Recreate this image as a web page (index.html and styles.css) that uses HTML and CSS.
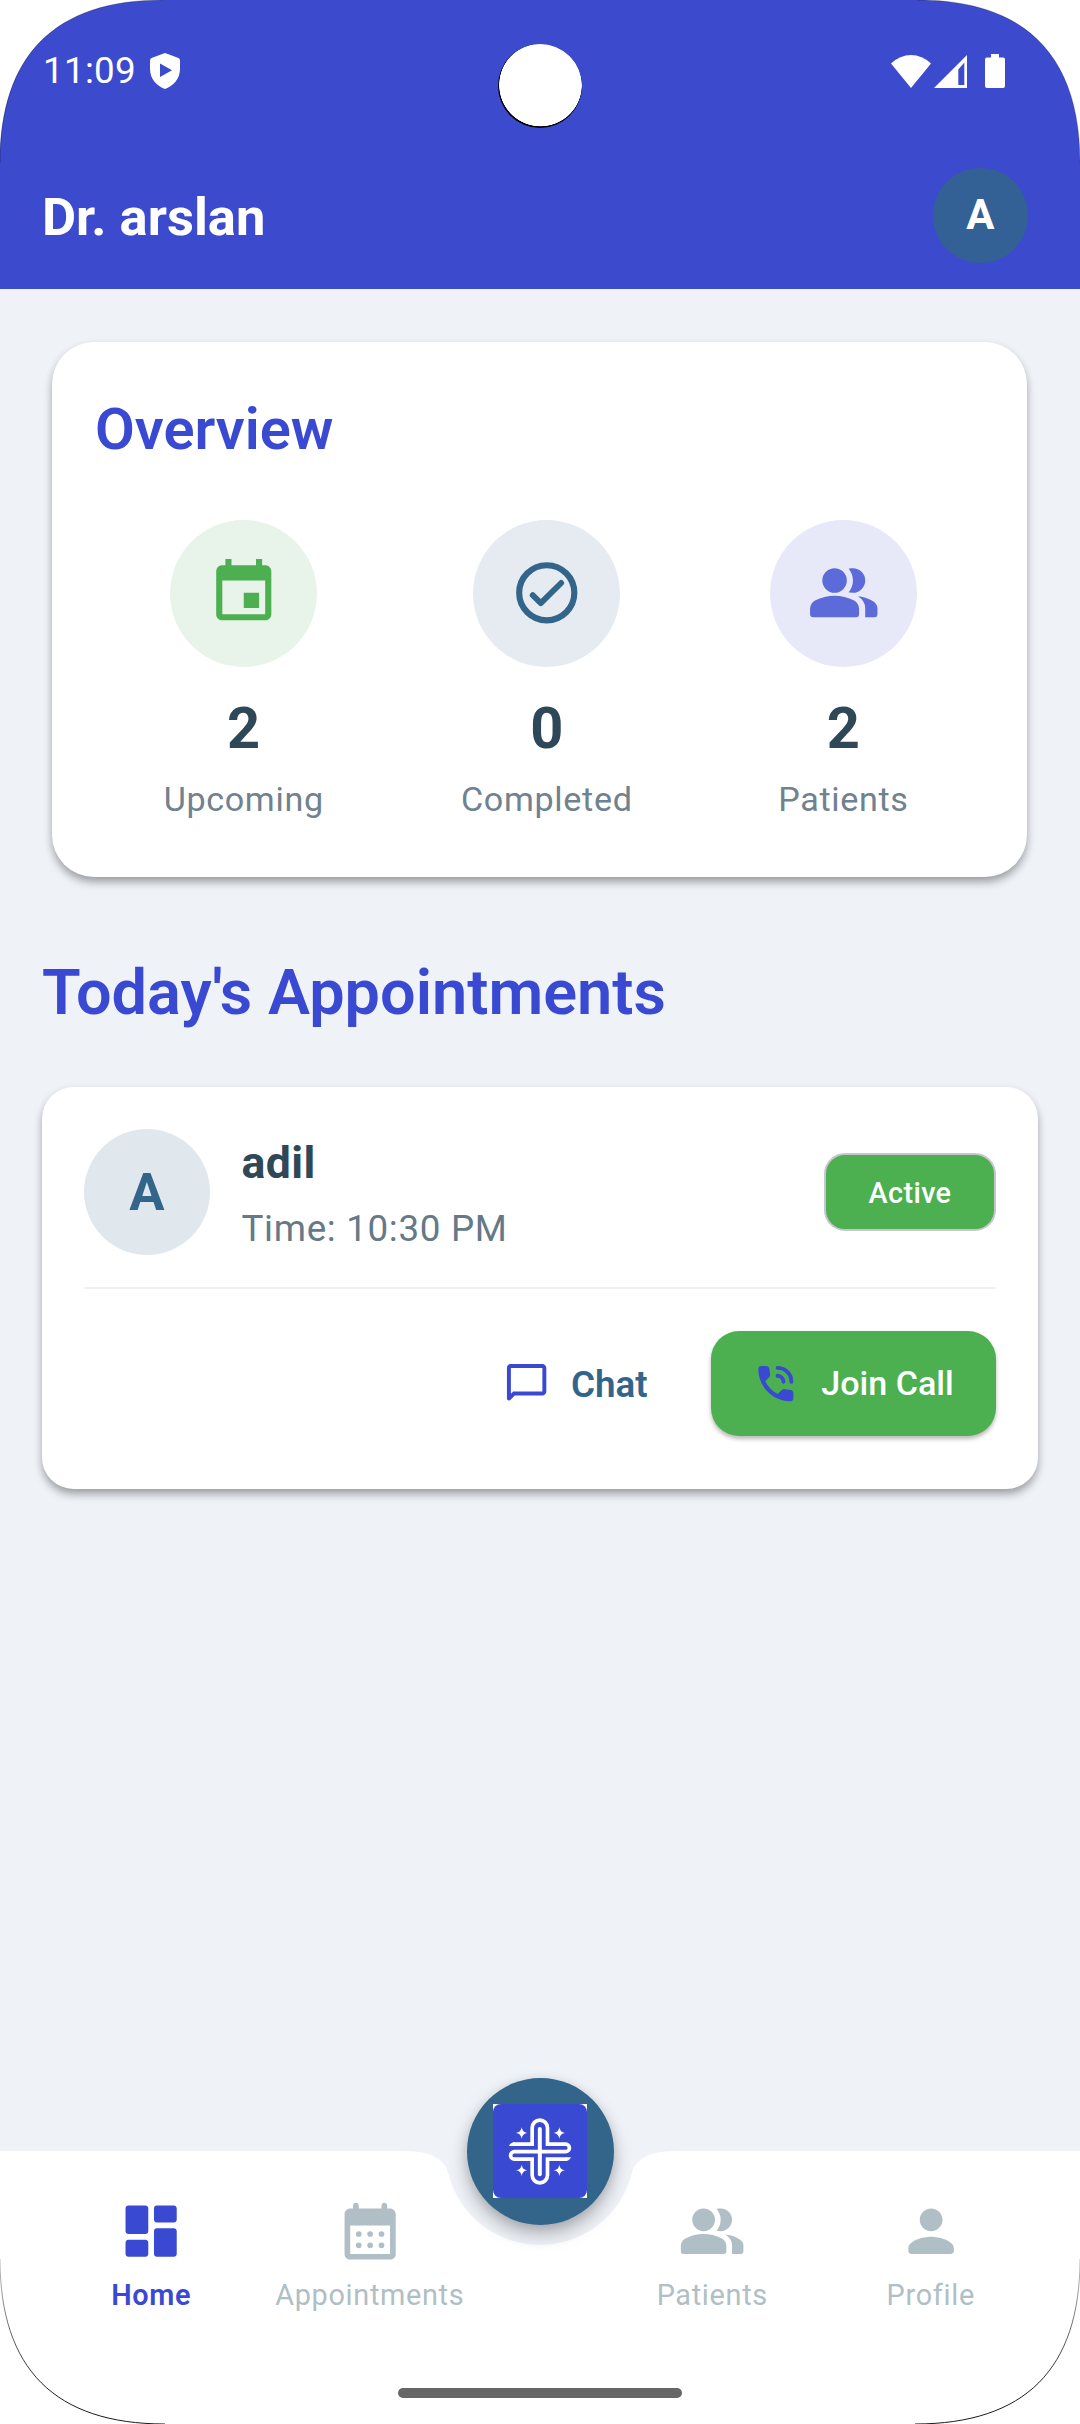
FILE: index.html
```html
<!DOCTYPE html>
<html lang="en">
<head>
<meta charset="utf-8">
<title>Doctor dashboard</title>
<link rel="stylesheet" href="styles.css">
</head>
<body>
<div class="phone">
  <header class="header">
    <div class="status">
      <span class="clock">11:09</span>
      <svg class="shield" viewBox="0 0 30 36"><path fill="#fff" fill-rule="evenodd" d="M15 0 28.500 5Q30 5.800 30 7.500V16C30 26 23 33 15 36 7 33 0 26 0 16V7.500Q0 5.800 1.500 5ZM10 10.500V24L22 17.300Z"/></svg>
      <span class="grow"></span>
      <svg class="wifi" viewBox="0 0 40 33"><path fill="#fff" d="M0 8.500Q9 0 20 0T40 8.500L20 33Z"/></svg>
      <svg class="signal" viewBox="0 0 33 33"><path fill="#fff" fill-rule="evenodd" d="M33 0V33H0ZM30.300 7.500 24.300 14.500V30H30.300Z"/></svg>
      <svg class="battery" viewBox="0 0 20 34"><path fill="#fff" d="M6 0h8v3.500h4a2 2 0 0 1 2 2V32a2 2 0 0 1-2 2H2a2 2 0 0 1-2-2V5.500a2 2 0 0 1 2-2h4Z"/></svg>
    </div>
    <div class="appbar">
      <h1 class="name">Dr. arslan</h1>
      <div class="me">A</div>
    </div>
  </header>

  <main class="content">
    <section class="card overview">
      <h2 class="card-title">Overview</h2>
      <div class="stats">
        <div class="stat">
          <div class="bubble green"><svg viewBox="0 0 24 24"><path d="M17 12h-5v5h5v-5zM16 1v2H8V1H6v2H5c-1.110 0-1.990.9-1.990 2L3 19c0 1.100.89 2 2 2h14c1.100 0 2-.9 2-2V5c0-1.100-.9-2-2-2h-1V1h-2zm3 18H5V8h14v11z"/></svg></div>
          <div class="count">2</div>
          <div class="label">Upcoming</div>
        </div>
        <div class="stat">
          <div class="bubble blue"><svg viewBox="0 0 24 24"><g fill="none" stroke="#33658a" stroke-width="2" stroke-linecap="round" stroke-linejoin="round"><circle cx="12" cy="12" r="9"/><path d="M7.400 12.800 10.050 15.400 16.700 8.800" stroke-width="1.900"/></g></svg></div>
          <div class="count">0</div>
          <div class="label">Completed</div>
        </div>
        <div class="stat">
          <div class="bubble violet"><svg viewBox="0 -960 960 960"><path d="M80-160q-40 0-40-40v-72q0-34 17.500-62.500T104-378q62-31 126-46.500T360-440q66 0 130 15.500T616-378q29 15 46.500 43.500T680-272v72q0 40-40 40Zm680 0v-120q0-44-24.500-84.500T666-434q51 6 96 20.500t84 35.500q36 20 55 44.500t19 53.500v80q0 40-40 40ZM360-480q-66 0-113-47t-47-113q0-66 47-113t113-47q66 0 113 47t47 113q0 66-47 113t-113 47Zm400-160q0 66-47 113t-113 47q-11 0-28-2.500t-28-5.500q27-32 41.500-71t14.500-81q0-42-14.500-81T544-792q14-5 28-6.500t28-1.500q66 0 113 47t47 113Z"/></svg></div>
          <div class="count">2</div>
          <div class="label">Patients</div>
        </div>
      </div>
    </section>

    <h2 class="section-title">Today's Appointments</h2>

    <article class="card appointment">
      <div class="patient">
        <div class="avatar">A</div>
        <div class="who">
          <div class="patient-name">adil</div>
          <div class="time">Time: 10:30 PM</div>
        </div>
        <div class="chip">Active</div>
      </div>
      <div class="actions">
        <div class="chat">
          <svg viewBox="0 0 24 24"><path d="M20 2H4c-1.100 0-2 .9-2 2v15.600c0 .89 1.080 1.340 1.710.71L6 18h14c1.100 0 2-.9 2-2V4c0-1.100-.9-2-2-2zm0 14H5.170L4 17.170V4h16v12z"/></svg>
          <span>Chat</span>
        </div>
        <div class="join">
          <svg viewBox="0 0 24 24"><path d="M3.200 4.600Q3.200 3 4.800 3H7.300Q8.600 3 8.800 4.300L9.200 7.200Q9.300 8.200 8.600 8.900L6.700 10.800Q8.800 15 13.100 17.300L15 15.400Q15.700 14.700 16.700 14.800L19.600 15.200Q21 15.400 21 16.700V19.300Q21 21 19.400 21C10.500 21 3.200 13.500 3.200 4.600Z"/><path fill="none" stroke="#3a49d2" stroke-width="2" stroke-linecap="round" d="M13 4a7 7 0 0 1 7 7M13 8a3.200 3.200 0 0 1 3 3"/></svg>
          <span>Join Call</span>
        </div>
      </div>
    </article>
  </main>

  <footer class="dock">
    <svg class="dock-shape" viewBox="0 0 1080 273"><path fill="#fff" d="M0 0H403.500Q443 0 448 21.700A94.500 94.500 0 0 0 540 93.800A94.500 94.500 0 0 0 632 21.700Q637 0 676.500 0H1080V273H0Z"/></svg>
    <nav class="tabs">
      <div class="tab active">
        <svg viewBox="0 0 24 24"><path d="M4 13h6c.55 0 1-.45 1-1V4c0-.55-.45-1-1-1H4c-.55 0-1 .45-1 1v8c0 .55.45 1 1 1zm0 8h6c.55 0 1-.45 1-1v-4c0-.55-.45-1-1-1H4c-.55 0-1 .45-1 1v4c0 .55.45 1 1 1zm10 0h6c.55 0 1-.45 1-1v-8c0-.55-.45-1-1-1h-6c-.55 0-1 .45-1 1v8c0 .55.45 1 1 1zM13 4v4c0 .55.45 1 1 1h6c.55 0 1-.45 1-1V4c0-.55-.45-1-1-1h-6c-.55 0-1 .45-1 1z"/></svg>
        <span>Home</span>
      </div>
      <div class="tab">
        <svg viewBox="0 0 24 24"><path fill-rule="evenodd" d="M19 4h-1V3c0-.55-.45-1-1-1s-1 .45-1 1v1H8V3c0-.55-.45-1-1-1s-1 .45-1 1v1H5c-1.110 0-1.990.9-1.990 2L3 20c0 1.100.89 2 2 2h14c1.100 0 2-.9 2-2V6c0-1.100-.9-2-2-2zm0 16H5V10h14v10z"/><circle cx="8" cy="13" r="1"/><circle cx="12" cy="13" r="1"/><circle cx="16" cy="13" r="1"/><circle cx="8" cy="17" r="1"/><circle cx="12" cy="17" r="1"/><circle cx="16" cy="17" r="1"/></svg>
        <span>Appointments</span>
      </div>
      <div class="tab right">
        <svg viewBox="0 -960 960 960"><path d="M80-160q-40 0-40-40v-72q0-34 17.500-62.500T104-378q62-31 126-46.500T360-440q66 0 130 15.500T616-378q29 15 46.500 43.500T680-272v72q0 40-40 40Zm680 0v-120q0-44-24.500-84.500T666-434q51 6 96 20.500t84 35.500q36 20 55 44.500t19 53.500v80q0 40-40 40ZM360-480q-66 0-113-47t-47-113q0-66 47-113t113-47q66 0 113 47t47 113q0 66-47 113t-113 47Zm400-160q0 66-47 113t-113 47q-11 0-28-2.500t-28-5.500q27-32 41.500-71t14.500-81q0-42-14.500-81T544-792q14-5 28-6.500t28-1.500q66 0 113 47t47 113Z"/></svg>
        <span>Patients</span>
      </div>
      <div class="tab">
        <svg viewBox="0 0 24 24"><path d="M12 12c2.210 0 4-1.790 4-4s-1.790-4-4-4-4 1.790-4 4 1.790 4 4 4zm0 2c-2.670 0-8 1.340-8 4v1c0 .55.45 1 1 1h14c.55 0 1-.45 1-1v-1c0-2.660-5.330-4-8-4z"/></svg>
        <span>Profile</span>
      </div>
    </nav>
    <div class="fab">
      <svg viewBox="0 0 282 282">
        <rect width="282" height="282" fill="#fff"/>
        <rect width="282" height="282" rx="24" fill="#3a49d2"/>
        <path fill="none" stroke="#fff" stroke-width="11" d="M60 120.500H117.500V71.500a23 23 0 0 1 46 0V120.500H218a11 11 0 0 1 0 22.500H64a11 11 0 0 0 0 22.500H117.500V213.500a23 23 0 0 0 46 0V165.500H222"/>
        <path fill="#fff" d="M48 126Q53 115 64 115V126ZM218 171V160H234Q229 171 218 171Z"/>
        <path stroke="#fff" stroke-width="12" stroke-linecap="round" d="M140.500 75V211"/>
        <path fill="#fff" d="M86 70q2 15 17 17-15 2-17 17-2-15-17-17 15-2 17-17ZM199 70q2 15 17 17-15 2-17 17-2-15-17-17 15-2 17-17ZM86 182q2 15 17 17-15 2-17 17-2-15-17-17 15-2 17-17ZM199 182q2 15 17 17-15 2-17 17-2-15-17-17 15-2 17-17Z"/>
      </svg>
    </div>
    <div class="gesture"></div>
  </footer>

  <div class="camera"></div>
  <svg class="bezel" viewBox="0 0 1080 2424">
    <defs>
      <linearGradient id="edge" gradientUnits="userSpaceOnUse" x1="0" y1="2259" x2="0" y2="2390">
        <stop offset="0" stop-color="#000" stop-opacity=".25"/>
        <stop offset="1" stop-color="#000"/>
      </linearGradient>
    </defs>
    <g fill="#fff">
      <path d="M0 163C0 55 55 0 163 0H0Z"/>
      <path d="M1080 163C1080 55 1025 0 917 0H1080Z"/>
    </g>
    <path fill="none" stroke="#000" stroke-opacity=".5" stroke-width=".5" d="M0 163C0 55 55 0 163 0M1080 163C1080 55 1025 0 917 0"/>
    <path fill="none" stroke="url(#edge)" stroke-width=".9" d="M0 2259C0 2369 55 2424 165 2424M1080 2259C1080 2369 1025 2424 915 2424"/>
  </svg>
</div>
</body>
</html>
```
FILE: styles.css
```css
* { box-sizing: border-box; }

body {
  margin: 0;
  font-family: Roboto, "Noto Sans", sans-serif;
  background: #fff;
}

h1, h2 { margin: 0; }

svg { display: block; flex: none; }

.phone {
  position: relative;
  display: flex;
  flex-direction: column;
  width: 1080px;
  height: 2424px;
  overflow: hidden;
  background: #eff3f8;
}

/* Header */
.header { height: 289px; background: #3c4acd; color: #fff; }

.status {
  display: flex;
  align-items: center;
  height: 142px;
  padding: 0 75px 0 43px;
}

.clock { width: 107px; font-size: 36.75px; letter-spacing: .3px; line-height: 44px; }
.shield { width: 30px; height: 36px; }
.grow { flex: 1; }
.wifi { width: 40px; height: 33px; margin-right: 3px; }
.signal { width: 33px; height: 33px; margin-right: 18px; }
.battery { width: 20px; height: 34px; }

.appbar {
  display: flex;
  align-items: center;
  justify-content: space-between;
  height: 147px;
  padding: 0 52.5px 0 42px;
}

.name { padding-top: 3px; font-size: 52.5px; font-weight: 700; line-height: 62px; }

.me {
  width: 94.5px;
  height: 94.5px;
  border-radius: 50%;
  background: #346195;
  font-size: 42px;
  font-weight: 700;
  line-height: 94px;
  text-align: center;
}

/* Content */
.content { flex: 1; padding: 53px 42px 0; }

.card {
  background: #fff;
  box-shadow: 0 6px 10px -1px rgba(0, 0, 0, .3), 0 3px 8px rgba(0, 0, 0, .1);
}

.overview {
  height: 535px;
  margin: 0 11px 0 10px;
  padding: 42px 41.5px 42px 43px;
  border-radius: 42px;
}

.card-title {
  margin-bottom: 45.5px;
  color: #3a49d2;
  font-size: 57.75px;
  font-weight: 600;
  line-height: 90px;
}

.stats { display: flex; justify-content: space-around; }
.stat { display: flex; flex-direction: column; align-items: center; }

.bubble {
  display: grid;
  place-items: center;
  width: 147px;
  height: 147px;
  margin-bottom: 21px;
  border-radius: 50%;
}

.bubble svg { width: 73.5px; height: 73.5px; }
.green { background: #e8f4ea; fill: #4caf50; }
.blue { background: #e6ebf1; }
.violet { background: #e7e9f8; fill: #5c6bd9; }

.count { color: #2f4858; font-size: 57.75px; font-weight: 700; line-height: 80px; }
.label { color: #70818f; font-size: 34.125px; letter-spacing: .66px; line-height: 62px; }

.section-title {
  margin: 74px 0 51.5px;
  color: #3a49d2;
  font-size: 63px;
  font-weight: 600;
  line-height: 84px;
}

.appointment { height: 402.5px; padding: 42px; border-radius: 31.5px; }

.patient {
  display: flex;
  align-items: center;
  height: 160.5px;
  padding-bottom: 32px;
  border-bottom: 2.6px solid #edf1f2;
}

.avatar {
  width: 126px;
  height: 126px;
  margin-right: 31.5px;
  border-radius: 50%;
  background: #e0e8ee;
  color: #33658a;
  font-size: 52.5px;
  font-weight: 700;
  line-height: 127px;
  text-align: center;
}

.who { flex: 1; padding-top: 8px; }
.patient-name { color: #2f4858; font-size: 44.6px; font-weight: 700; letter-spacing: .4px; line-height: 66px; }
.time { color: #657987; font-size: 36.75px; letter-spacing: .68px; line-height: 66px; }

.chip {
  width: 172px;
  height: 78px;
  border: 2.6px solid #cac4d0;
  border-radius: 21px;
  background: #4caf50;
  color: #fff;
  font-size: 28.875px;
  font-weight: 500;
  letter-spacing: .35px;
  line-height: 76px;
  text-align: center;
}

.actions {
  display: flex;
  align-items: center;
  justify-content: flex-end;
  padding-top: 42px;
}

.chat { display: flex; align-items: center; gap: 21px; margin-right: 63.5px; padding-top: 1px; color: #33658a; font-size: 36.75px; font-weight: 600; }
.chat svg, .join svg { width: 47.25px; height: 47.25px; fill: #3a49d2; }

.join {
  display: flex;
  align-items: center;
  gap: 22px;
  width: 285px;
  height: 105px;
  padding-left: 41px;
  border-radius: 28px;
  background: #4caf50;
  box-shadow: 0 3px 4px rgba(0, 0, 0, .28);
  color: #fff;
  font-size: 34.125px;
  font-weight: 500;
}

.join span { padding-bottom: 2px; }

/* Bottom navigation */
.dock { position: relative; height: 273px; }
.dock-shape { position: absolute; inset: 0; width: 1080px; height: 273px; }

.tabs {
  position: relative;
  display: flex;
  padding: 46px 40px 0 42px;
}

.tab {
  display: flex;
  flex-direction: column;
  align-items: center;
  width: 218.5px;
  color: #b0bec5;
  fill: #b0bec5;
  font-size: 28.875px;
  letter-spacing: .68px;
  line-height: 40px;
}

.tab svg { width: 68.25px; height: 68.25px; margin-bottom: 10px; }
.tab.active { color: #3a49d2; fill: #3a49d2; font-weight: 600; }
.tab.right { margin-left: 124px; }

.fab {
  position: absolute;
  top: -73.5px;
  left: 466.5px;
  display: grid;
  place-items: center;
  width: 147px;
  height: 147px;
  border-radius: 50%;
  background: #33658a;
  box-shadow: 0 9px 18px rgba(0, 0, 0, .28), 0 2px 10px rgba(0, 0, 0, .08);
}

.fab svg { width: 94px; height: 94px; }

.gesture {
  position: absolute;
  bottom: 26px;
  left: 398px;
  width: 284px;
  height: 10px;
  border-radius: 5px;
  background: #666;
}

/* Device cutouts drawn over the screen */
.camera {
  position: absolute;
  top: 44px;
  left: 498px;
  width: 84px;
  height: 84px;
  border-radius: 50%;
  background: radial-gradient(circle at 42.5px 41px, #fff 41px, #000 41.6px);
}

.bezel { position: absolute; inset: 0; width: 1080px; height: 2424px; }
```
